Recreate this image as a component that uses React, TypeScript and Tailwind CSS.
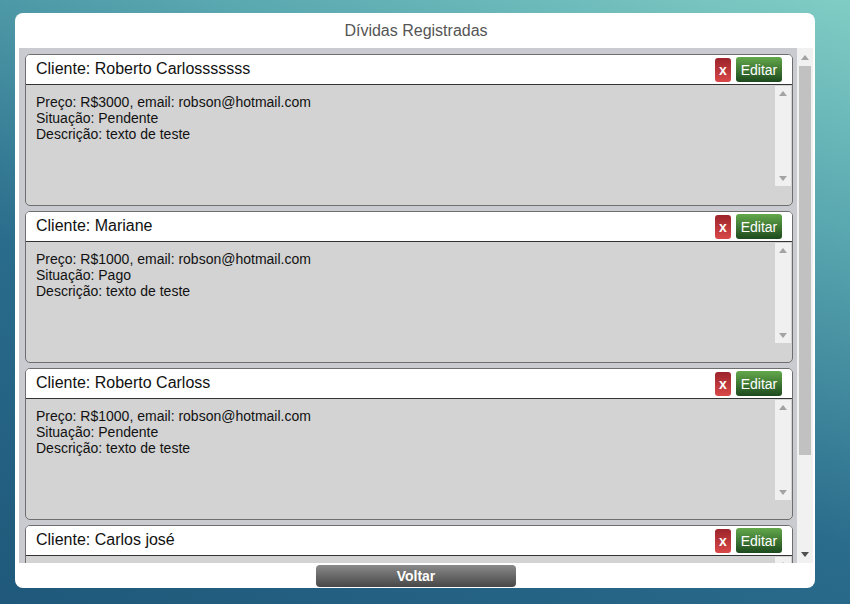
import React from "react";

type Divida = { cliente: string; preco: string; situacao: string; descricao: string };

const dividas: Divida[] = [
  { cliente: "Roberto Carlosssssss", preco: "R$3000", situacao: "Pendente", descricao: "texto de teste" },
  { cliente: "Mariane", preco: "R$1000", situacao: "Pago", descricao: "texto de teste" },
  { cliente: "Roberto Carloss", preco: "R$1000", situacao: "Pendente", descricao: "texto de teste" },
  { cliente: "Carlos josé", preco: "R$1000", situacao: "Pendente", descricao: "texto de teste" },
];

function Up({ color }: { color: string }) {
  return (
    <svg width="8" height="5" viewBox="0 0 8 5">
      <path d="M0 5 L4 0 L8 5 Z" fill={color} />
    </svg>
  );
}
function Down({ color }: { color: string }) {
  return (
    <svg width="8" height="5" viewBox="0 0 8 5">
      <path d="M0 0 L8 0 L4 5 Z" fill={color} />
    </svg>
  );
}

function Card({ d }: { d: Divida }) {
  return (
    <div className="mb-[5px] ml-[6px] mr-[4px] h-[152px] shrink-0 overflow-hidden rounded-[5px] border border-[#6e6e6e] bg-[#d3d3d3]">
      <div className="flex h-[30px] items-center border-b border-[#333] bg-white pl-[10px] pr-[10px]">
        <span className="flex-1 pb-[2px] text-[16px] leading-[20px] text-[#111]">Cliente: {d.cliente}</span>
        <div className="flex items-center gap-[5px]">
          <button className="flex h-[24px] w-[16px] items-center justify-center rounded-[3px] bg-[linear-gradient(to_bottom,#9c242b,#d94848)] text-[14px] font-bold leading-[16px] text-white">
            x
          </button>
          <button className="flex h-[25px] w-[46px] items-center justify-center rounded-[3px] bg-[linear-gradient(to_bottom,#63a84b,#1d4a1e)] text-[14px] leading-[16px] text-white">
            Editar
          </button>
        </div>
      </div>
      <div className="mr-[1px] mt-[1px] flex h-[100px]">
        <div className="flex-1 pl-[10px] pt-[8px] text-[14px] leading-[16px] text-[#111]">
          <div>Preço: {d.preco}, email: robson@hotmail.com</div>
          <div>Situação: {d.situacao}</div>
          <div>Descrição: {d.descricao}</div>
        </div>
        <div className="flex w-[16px] flex-col items-center justify-between bg-[#f0f0f0] py-[5px]">
          <Up color="#a3a3a3" />
          <Down color="#a3a3a3" />
        </div>
      </div>
    </div>
  );
}

export default function App() {
  return (
    <div
      className="flex h-[604px] w-full flex-col bg-[linear-gradient(20deg,#1f587a_0%,#2a6c8c_40%,#5aa8b0_75%,#80cdc5_100%)] pl-[15px] pr-[35px] pt-[13px] pb-[16px]"
      style={{ fontFamily: '"Liberation Sans", Arial, sans-serif' }}
    >
      <div className="flex h-[575px] w-[800px] flex-col rounded-[8px] bg-white pl-[4px] pr-[2px]">
        <div className="flex h-[35px] items-center justify-center text-[16px] text-[#555]">
          Dívidas Registradas
        </div>
        <div className="flex h-[515px] bg-[#c9cbd1]">
          <div className="flex flex-1 flex-col overflow-hidden pt-[6px]">
            {dividas.map((d, i) => (
              <Card key={i} d={d} />
            ))}
          </div>
          <div className="flex w-[16px] flex-col items-center bg-[#f1f1f1]">
            <div className="flex h-[18px] items-center justify-center">
              <Up color="#a3a3a3" />
            </div>
            <div className="h-[389px] w-[12px] bg-[#c1c1c1]" />
            <div className="flex-1" />
            <div className="flex h-[18px] items-center justify-center">
              <Down color="#505050" />
            </div>
          </div>
        </div>
        <div className="flex justify-center pt-[2px]">
          <button className="h-[22px] w-[200px] rounded-[4px] bg-[linear-gradient(to_bottom,#8a8a8a,#474747)] text-[14px] font-bold leading-[22px] text-white">
            Voltar
          </button>
        </div>
      </div>
    </div>
  );
}
